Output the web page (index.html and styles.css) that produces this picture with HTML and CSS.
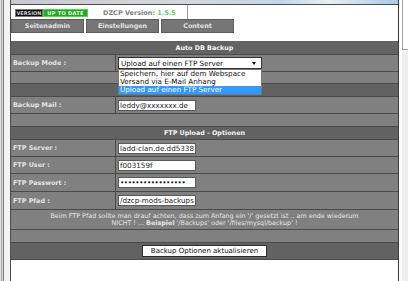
FILE: index.html
```html
<!DOCTYPE html>
<html>
<head>
<meta charset="utf-8">
<link rel="stylesheet" href="styles.css">
</head>
<body>
<div class="page">
  <div class="frame-left"></div>
  <div class="main">
    <div class="banner"></div>
    <div class="verbox">
      <span class="badge"><span class="b-ver">VERSION</span><span class="b-ok">UP TO DATE</span></span>
      <span class="dzcp">DZCP Version: <span class="vnum">1.5.5</span></span>
    </div>
    <div class="tabs">
      <div class="tab">Seitenadmin</div>
      <div class="tab">Einstellungen</div>
      <div class="tab">Content</div>
    </div>
    <div class="grid">
      <div class="row head h14">Auto DB Backup</div>
      <div class="row field h17">
        <div class="label">Backup Mode :</div>
        <div class="value">
          <div class="select"><span>Upload auf einen FTP Server</span><span class="arrow"></span></div>
          <div class="dropdown">
            <div class="opt">Speichern, hier auf dem Webspace</div>
            <div class="opt">Versand via E-Mail Anhang</div>
            <div class="opt sel">Upload auf einen FTP Server</div>
          </div>
        </div>
      </div>
      <div class="row empty h12"></div>
      <div class="row head h13"></div>
      <div class="row field h17">
        <div class="label">Backup Mail :</div>
        <div class="value"><input class="inp" type="text" value="leddy@xxxxxxx.de"></div>
      </div>
      <div class="row empty h13"></div>
      <div class="row head h13">FTP Upload - Optionen</div>
      <div class="row field h17">
        <div class="label">FTP Server :</div>
        <div class="value"><input class="inp" type="text" value="ladd-clan.de.dd5338"></div>
      </div>
      <div class="row field h17">
        <div class="label">FTP User :</div>
        <div class="value"><input class="inp" type="text" value="f003159f"></div>
      </div>
      <div class="row field h18">
        <div class="label">FTP Passwort :</div>
        <div class="value"><input class="inp dots" type="text" value="•••••••••••••••••"></div>
      </div>
      <div class="row field h18">
        <div class="label">FTP Pfad :</div>
        <div class="value"><input class="inp" type="text" value="/dzcp-mods-backups"></div>
      </div>
      <div class="row notice h20">
        <p>Beim FTP Pfad sollte man drauf achten, dass zum Anfang ein '/' gesetzt ist .. am ende wiederum<br>NICHT ! ... <b>Beispiel</b> '/Backups' oder '/files/mysql/backup' !</p>
      </div>
      <div class="row empty h13"></div>
      <div class="row head h17"><button class="btn">Backup Optionen aktualisieren</button></div>
    </div>
  </div>
  <div class="frame-right"><div class="rbox"></div></div>
</div>
</body>
</html>
```

FILE: styles.css
```css
html, body {
  margin: 0;
  padding: 0;
}
body {
  width: 408px;
  height: 281px;
  overflow: hidden;
  background: #f0f0f0;
  font-family: "DejaVu Sans", Verdana, sans-serif;
}
.page {
  display: flex;
  height: 281px;
}
.frame-left {
  width: 10px;
  border-right: 1px solid #4d4d4d;
  background: linear-gradient(to right, #e4e4e4 0 1px, #a8a8a8 1px 2px, #dcdcdc 2px 3px, #7c7c7c 3px 4px, #f4f4f4 4px);
}
.main {
  width: 387px;
  border-right: 1px solid #3c3c3c;
  background: #fff;
  display: flex;
  flex-direction: column;
}
.frame-right {
  flex: 1;
  border-left: 3px solid #fff;
  background: #f0f0f0;
}
.rbox {
  height: 49px;
  background: #fff;
  border-left: 1px solid #a0a0a0;
  border-bottom: 1px solid #a0a0a0;
}
.banner {
  height: 4px;
  border-bottom: 1px solid #4a4a4a;
  background: linear-gradient(90deg, #c6c9cd 0%, #d3d8dd 45%, #c2d6e6 70%, #e8eff5 82%, #a9c9e3 100%);
}
.verbox {
  width: 177px;
  height: 14px;
  border-right: 1px solid #9a9a9a;
  display: flex;
  align-items: center;
  padding-top: 1px;
  box-sizing: border-box;
}
.badge {
  display: flex;
  margin-left: 4px;
  height: 8px;
}
.b-ver, .b-ok {
  font-size: 5px;
  font-weight: bold;
  line-height: 6px;
  display: flex;
  align-items: center;
  justify-content: center;
  white-space: nowrap;
}
.b-ver {
  width: 26px;
  background: #0c0c0c;
  color: #d0d0d0;
  border: 1px solid #777;
}
.b-ok {
  width: 43px;
  background: #26a626;
  color: #e8ffe8;
  border: 1px solid #48d848;
  letter-spacing: 0.3px;
}
.dzcp {
  margin-left: 15px;
  font-size: 6.5px;
  font-weight: bold;
  color: #7e7e7e;
}
.vnum {
  color: #5fcf5f;
}
.tabs {
  display: flex;
  gap: 2px;
  height: 14px;
  background: #fff;
}
.tab {
  width: 71px;
  height: 12px;
  background: #767676;
  border: 1px solid #5e5e5e;
  color: #e2e2e2;
  font-size: 6.4px;
  font-weight: bold;
  display: flex;
  align-items: center;
  justify-content: center;
}
.grid {
  margin-top: 8px;
  display: flex;
  flex-direction: column;
}
.row {
  box-sizing: border-box;
  border-bottom: 1px solid #4a4a4a;
  display: flex;
  align-items: center;
  background: #808080;
}
.h12 { height: 12px; }
.h13 { height: 13px; }
.h14 { height: 14px; }
.h17 { height: 17px; }
.h18 { height: 18px; }
.h20 { height: 20px; }
.head {
  background: #626262;
  justify-content: center;
  color: #f4f4f4;
  font-size: 6.4px;
  font-weight: bold;
}
.field {
  align-items: stretch;
}
.label {
  width: 105px;
  border-right: 1px solid #4a4a4a;
  padding-left: 2px;
  box-sizing: border-box;
  display: flex;
  align-items: center;
  color: #e4e4e4;
  font-size: 6.4px;
  font-weight: bold;
}
.value {
  flex: 1;
  display: flex;
  align-items: center;
  padding-left: 2px;
  position: relative;
}
.inp {
  width: 78px;
  height: 11px;
  box-sizing: border-box;
  border: 1px solid #5a5a5a;
  background: #fff;
  margin: 0;
  padding: 0 1px;
  font-family: "DejaVu Sans", Verdana, sans-serif;
  font-size: 7.2px;
  color: #1a1a1a;
  outline: none;
}
.dots {
  letter-spacing: -0.4px;
}
.select {
  width: 144px;
  height: 12px;
  box-sizing: border-box;
  border: 1px solid #333;
  background: #fff;
  display: flex;
  align-items: center;
  justify-content: space-between;
  padding: 0 5px 0 2px;
  font-size: 7.2px;
  color: #111;
}
.arrow {
  width: 0;
  height: 0;
  border-left: 2.5px solid transparent;
  border-right: 2.5px solid transparent;
  border-top: 3px solid #111;
}
.dropdown {
  position: absolute;
  left: 2px;
  top: 14px;
  width: 144px;
  box-sizing: border-box;
  border: 1px solid #777;
  background: #fff;
  z-index: 2;
}
.opt {
  height: 8px;
  line-height: 8px;
  padding-left: 1px;
  font-size: 7.2px;
  color: #111;
  white-space: nowrap;
}
.opt.sel {
  background: #3399ff;
  color: #fff;
}
.notice {
  justify-content: center;
}
.notice p {
  margin: 0;
  text-align: center;
  color: #e6e6e6;
  font-size: 6.4px;
  line-height: 7px;
}
.btn {
  width: 125px;
  height: 12px;
  box-sizing: border-box;
  border: 1px solid #2a2a2a;
  background: #fff;
  padding: 0;
  margin: 0;
  font-family: "DejaVu Sans", Verdana, sans-serif;
  font-size: 7px;
  color: #111;
  font-weight: normal;
}
```
